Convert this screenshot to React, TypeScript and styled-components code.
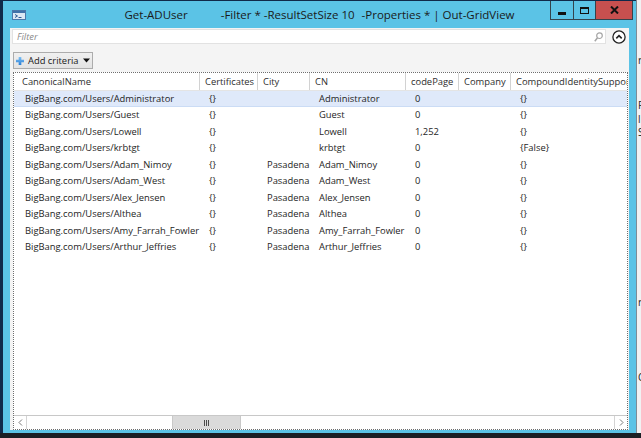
import React from "react";
import styled, { createGlobalStyle } from "styled-components";

const FONT = `"Open Sans", "Noto Sans", "Liberation Sans", sans-serif`;

const GlobalStyle = createGlobalStyle`
  html, body { margin: 0; padding: 0; width: 641px; height: 438px; overflow: hidden; background: #10294a; }
  #root { width: 641px; height: 438px; }
  * { box-sizing: border-box; }
`;

const COLS = "186px 58px 52px 96px 53px 52px 160px";

const Desktop = styled.div`
  display: flex;
  align-items: flex-start;
  width: 641px;
  height: 438px;
  padding-left: 3px;
  background: linear-gradient(#10294a 0 433px, #1b1f25 433px);
  font-family: ${FONT};
`;

const Window = styled.div`
  width: 633px;
  height: 432px;
  margin-top: 1px;
  background: #5bc3e6;
  display: flex;
  flex-direction: column;
`;

const RightStrip = styled.div`
  flex: 1;
  height: 433px;
  background: #f1f2f3;
  border-left: 1px solid #7d8c96;
  overflow: hidden;
  display: flex;
  flex-direction: column;
  font-size: 10px;
  color: #222;
`;

const StripGlyph = styled.span<{ $top: number }>`
  margin-top: ${(p) => p.$top}px;
  line-height: 10px;
  padding-left: 1px;
`;

const TitleBar = styled.div`
  display: grid;
  grid-template-columns: 1fr auto 1fr;
  height: 27px;
`;

const TitleIcon = styled.div`
  padding: 9px 0 0 9px;
  display: flex;
`;

const TitleText = styled.div`
  font-size: 11.5px;
  line-height: 27px;
  color: #1a1a1a;
  white-space: pre;
`;

const TitleGap = styled.span<{ $w: number }>`
  display: inline-block;
  width: ${(p) => p.$w}px;
`;

const CaptionGroup = styled.div`
  justify-self: end;
  display: flex;
  height: 19px;
  margin-right: 3px;
  border-right: 1px solid #34434c;
`;

const CaptionButton = styled.div<{ $w: number; $close?: boolean }>`
  width: ${(p) => p.$w}px;
  height: 19px;
  border-left: 1px solid #34434c;
  border-bottom: 1px solid #34434c;
  background: ${(p) => (p.$close ? "#c7504f" : "transparent")};
  display: flex;
  align-items: center;
  justify-content: center;
`;

const MinGlyph = styled.div`
  width: 8px;
  height: 3px;
  background: #111;
  margin-top: 6px;
`;

const MaxGlyph = styled.div`
  width: 9px;
  height: 7px;
  border: 1px solid #111;
  border-top-width: 2px;
  margin-top: 1px;
`;

const Client = styled.div`
  flex: 1;
  margin: 0 7px 3px 7px;
  background: #f4f4f4;
  display: flex;
  flex-direction: column;
`;

const FilterRow = styled.div`
  display: flex;
  align-items: center;
  padding: 1px 3px 0 2px;
`;

const FilterBox = styled.div`
  flex: 1;
  height: 15px;
  background: #fff;
  border: 1px solid #e2e2e2;
  display: flex;
  align-items: center;
  justify-content: space-between;
  padding: 0 2px 0 4px;
`;

const FilterPlaceholder = styled.span`
  font-size: 9.4px;
  font-style: italic;
  color: #8a8a8a;
`;

const CollapseButton = styled.div`
  width: 14px;
  height: 14px;
  margin-left: 6px;
  display: flex;
`;

const Toolbar = styled.div`
  display: flex;
  padding: 8px 0 0 3px;
`;

const AddCriteria = styled.div`
  width: 80px;
  height: 17px;
  border: 1px solid #acacac;
  background: linear-gradient(#f0f0f0, #e3e3e3);
  display: flex;
  align-items: center;
  padding-left: 2px;
  gap: 4px;
  font-size: 9.4px;
  color: #1a1a1a;
`;

const Grid = styled.div`
  flex: 1;
  margin: 3px 1px 0 3px;
  border: 1px dotted #6e6e6e;
  background: #fff;
  display: flex;
  flex-direction: column;
  overflow: hidden;
  min-height: 0;
`;

const HeaderRow = styled.div`
  display: grid;
  grid-template-columns: ${COLS};
  height: 18px;
  border-bottom: 1px solid #e4e4e4;
  flex-shrink: 0;
`;

const HeaderCell = styled.div<{ $first?: boolean }>`
  font-size: 9.4px;
  line-height: 17px;
  color: #2e2e2e;
  padding-left: ${(p) => (p.$first ? 8 : 5)}px;
  border-right: 1px solid #d2d2d2;
  white-space: nowrap;
  overflow: hidden;
`;

const Body = styled.div`
  flex: 1;
  min-height: 0;
  overflow: hidden;
`;

const Row = styled.div<{ $selected?: boolean }>`
  display: grid;
  grid-template-columns: ${COLS};
  height: 16.44px;
  background: ${(p) => (p.$selected ? "#dfe9fa" : "transparent")};
  box-shadow: ${(p) => (p.$selected ? "inset 0 -1px 0 #cbdcf5" : "none")};
`;

const Cell = styled.div<{ $first?: boolean }>`
  font-size: 9.4px;
  line-height: 16.44px;
  color: #1e1e1e;
  padding-left: ${(p) => (p.$first ? 11 : 9)}px;
  white-space: nowrap;
  overflow: hidden;
`;

const ScrollBar = styled.div`
  height: 14px;
  border-top: 1px solid #c8c8c8;
  display: flex;
  flex-shrink: 0;
  background: #fff;
`;

const ScrollArrow = styled.div<{ $side: "left" | "right" }>`
  width: 13px;
  display: flex;
  align-items: center;
  justify-content: center;
  ${(p) => (p.$side === "left" ? "border-right" : "border-left")}: 1px solid #d4d4d4;
`;

const Track = styled.div`
  flex: 1;
  display: flex;
`;

const Thumb = styled.div<{ $left: number; $w: number }>`
  margin-left: ${(p) => p.$left}px;
  width: ${(p) => p.$w}px;
  background: #dadada;
  border-left: 1px solid #c9c9c9;
  border-right: 1px solid #c9c9c9;
  display: flex;
  align-items: center;
  justify-content: center;
`;

const columns = ["CanonicalName", "Certificates", "City", "CN", "codePage", "Company", "CompoundIdentitySupported"];

const rows: string[][] = [
  ["BigBang.com/Users/Administrator", "{}", "", "Administrator", "0", "", "{}"],
  ["BigBang.com/Users/Guest", "{}", "", "Guest", "0", "", "{}"],
  ["BigBang.com/Users/Lowell", "{}", "", "Lowell", "1,252", "", "{}"],
  ["BigBang.com/Users/krbtgt", "{}", "", "krbtgt", "0", "", "{False}"],
  ["BigBang.com/Users/Adam_Nimoy", "{}", "Pasadena", "Adam_Nimoy", "0", "", "{}"],
  ["BigBang.com/Users/Adam_West", "{}", "Pasadena", "Adam_West", "0", "", "{}"],
  ["BigBang.com/Users/Alex_Jensen", "{}", "Pasadena", "Alex_Jensen", "0", "", "{}"],
  ["BigBang.com/Users/Althea", "{}", "Pasadena", "Althea", "0", "", "{}"],
  ["BigBang.com/Users/Amy_Farrah_Fowler", "{}", "Pasadena", "Amy_Farrah_Fowler", "0", "", "{}"],
  ["BigBang.com/Users/Arthur_Jeffries", "{}", "Pasadena", "Arthur_Jeffries", "0", "", "{}"],
];

const PsIcon = () => (
  <svg width="14" height="10" viewBox="0 0 14 10">
    <rect x="0.5" y="0.5" width="13" height="9" fill="#dce8f4" stroke="#4a78aa" />
    <rect x="1" y="1" width="12" height="2" fill="#3f71a8" />
    <path d="M3 4.5 L5.5 6 L3 7.5" fill="none" stroke="#2a5a94" strokeWidth="1" />
    <path d="M6.5 7.5 H9.5" stroke="#2a5a94" strokeWidth="1" />
  </svg>
);

const CloseGlyph = () => (
  <svg width="9" height="8" viewBox="0 0 9 8">
    <path d="M1 0.5 L8 7.5 M8 0.5 L1 7.5" stroke="#111" strokeWidth="2" />
  </svg>
);

const SearchIcon = () => (
  <svg width="9" height="10" viewBox="0 0 9 10">
    <circle cx="5.5" cy="3.7" r="2.8" fill="none" stroke="#a5a5a5" strokeWidth="1.2" />
    <path d="M3.5 5.8 L0.8 9.2" stroke="#a5a5a5" strokeWidth="1.5" />
  </svg>
);

const CollapseIcon = () => (
  <svg width="14" height="14" viewBox="0 0 14 14">
    <circle cx="7" cy="7" r="6.1" fill="#fff" stroke="#222" strokeWidth="1.3" />
    <path d="M4.3 8.4 L7 5.6 L9.7 8.4" fill="none" stroke="#222" strokeWidth="1.6" />
  </svg>
);

const PlusIcon = () => (
  <svg width="8" height="8" viewBox="0 0 9 9">
    <defs>
      <linearGradient id="pg" x1="0" y1="0" x2="0" y2="1">
        <stop offset="0" stopColor="#7cc0f4" />
        <stop offset="1" stopColor="#2a7fd6" />
      </linearGradient>
    </defs>
    <path d="M3 0 H6 V3 H9 V6 H6 V9 H3 V6 H0 V3 H3 Z" fill="url(#pg)" />
  </svg>
);

const DropTriangle = () => (
  <svg width="7" height="5" viewBox="0 0 7 5">
    <path d="M0 0.5 H7 L3.5 4.5 Z" fill="#111" />
  </svg>
);

const Chevron = ({ dir }: { dir: "left" | "right" }) => (
  <svg width="5" height="7" viewBox="0 0 5 7">
    <path
      d={dir === "left" ? "M4 0.5 L1 3.5 L4 6.5" : "M1 0.5 L4 3.5 L1 6.5"}
      fill="none"
      stroke="#7a7a7a"
      strokeWidth="1"
    />
  </svg>
);

const Grip = () => (
  <svg width="6" height="6" viewBox="0 0 6 6">
    <path d="M0.5 0 V6 M2.5 0 V6 M4.5 0 V6" stroke="#4a4a4a" strokeWidth="1" />
  </svg>
);

export default function App() {
  return (
    <>
      <GlobalStyle />
      <Desktop>
        <Window>
          <TitleBar>
            <TitleIcon>
              <PsIcon />
            </TitleIcon>
            <TitleText>
              Get-ADUser
              <TitleGap $w={33} />
              -Filter * -ResultSetSize 10
              <TitleGap $w={7} />
              -Properties * | Out-GridView
            </TitleText>
            <CaptionGroup>
              <CaptionButton $w={23}>
                <MinGlyph />
              </CaptionButton>
              <CaptionButton $w={22}>
                <MaxGlyph />
              </CaptionButton>
              <CaptionButton $w={37} $close>
                <CloseGlyph />
              </CaptionButton>
            </CaptionGroup>
          </TitleBar>
          <Client>
            <FilterRow>
              <FilterBox>
                <FilterPlaceholder>Filter</FilterPlaceholder>
                <SearchIcon />
              </FilterBox>
              <CollapseButton>
                <CollapseIcon />
              </CollapseButton>
            </FilterRow>
            <Toolbar>
              <AddCriteria>
                <PlusIcon />
                <span>Add criteria</span>
                <DropTriangle />
              </AddCriteria>
            </Toolbar>
            <Grid>
              <HeaderRow>
                {columns.map((c, i) => (
                  <HeaderCell key={c} $first={i === 0}>
                    {c}
                  </HeaderCell>
                ))}
              </HeaderRow>
              <Body>
                {rows.map((r, ri) => (
                  <Row key={ri} $selected={ri === 0}>
                    {r.map((v, ci) => (
                      <Cell key={ci} $first={ci === 0}>
                        {v}
                      </Cell>
                    ))}
                  </Row>
                ))}
              </Body>
              <ScrollBar>
                <ScrollArrow $side="left">
                  <Chevron dir="left" />
                </ScrollArrow>
                <Track>
                  <Thumb $left={145} $w={69}>
                    <Grip />
                  </Thumb>
                </Track>
                <ScrollArrow $side="right">
                  <Chevron dir="right" />
                </ScrollArrow>
              </ScrollBar>
            </Grid>
          </Client>
        </Window>
        <RightStrip>
          <StripGlyph $top={55}>r</StripGlyph>
          <StripGlyph $top={35}>R</StripGlyph>
          <StripGlyph $top={4}>l</StripGlyph>
          <StripGlyph $top={3}>S</StripGlyph>
          <StripGlyph $top={160}>r</StripGlyph>
          <StripGlyph $top={65}>C</StripGlyph>
        </RightStrip>
      </Desktop>
    </>
  );
}
